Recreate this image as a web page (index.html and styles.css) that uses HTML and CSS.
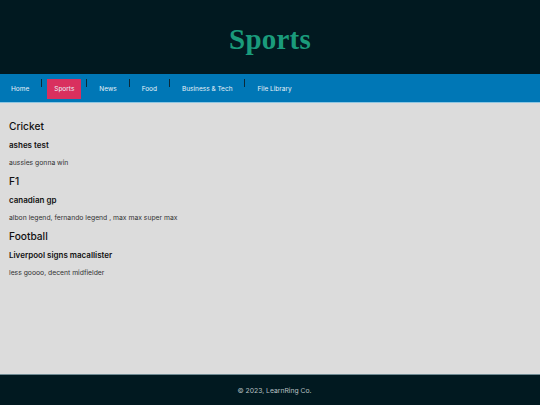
FILE: index.html
```html
<!DOCTYPE html>
<html lang="en">
<head>
<meta charset="utf-8">
<title>Sports</title>
<link rel="stylesheet" href="styles.css">
</head>
<body>
<header class="site-header">
  <h1 class="site-title">Sports</h1>
</header>
<nav class="site-nav">
  <a class="nav-link" href="#">Home</a>
  <span class="nav-sep"></span>
  <a class="nav-link active" href="#">Sports</a>
  <span class="nav-sep"></span>
  <a class="nav-link" href="#">News</a>
  <span class="nav-sep"></span>
  <a class="nav-link" href="#">Food</a>
  <span class="nav-sep"></span>
  <a class="nav-link" href="#">Business &amp; Tech</a>
  <span class="nav-sep"></span>
  <a class="nav-link" href="#">File Library</a>
</nav>
<main class="content">
  <section class="sport">
    <h2 class="sport-title">Cricket</h2>
    <h3 class="post-title">ashes test</h3>
    <p class="post-body">aussies gonna win</p>
  </section>
  <section class="sport">
    <h2 class="sport-title">F1</h2>
    <h3 class="post-title">canadian gp</h3>
    <p class="post-body">albon legend, fernando legend , max max super max</p>
  </section>
  <section class="sport">
    <h2 class="sport-title">Football</h2>
    <h3 class="post-title">Liverpool signs macallister</h3>
    <p class="post-body">less goooo, decent midfielder</p>
  </section>
</main>
<footer class="site-footer">
  <p class="footer-text">© 2023, LearnRing Co.</p>
</footer>
</body>
</html>
```

FILE: styles.css
```css
html, body {
  margin: 0;
  padding: 0;
}
body {
  height: 405px;
  display: flex;
  flex-direction: column;
  font-family: Inter, "Noto Sans", sans-serif;
  background: #dcdcdc;
}
.site-header {
  height: 74px;
  background: #011920;
  display: flex;
  align-items: center;
  justify-content: center;
}
.site-title {
  margin: 0;
  padding-top: 4px;
  font-family: "Liberation Serif", "DejaVu Serif", serif;
  font-weight: bold;
  font-size: 29px;
  color: #1a9b7b;
  letter-spacing: 0.2px;
}
.site-nav {
  height: 28px;
  background: #0077b6;
  border-bottom: 1px solid #8ec6e2;
  display: flex;
  align-items: center;
  padding-left: 4px;
}
.nav-link {
  display: block;
  height: 20px;
  line-height: 20px;
  margin-top: 1px;
  padding: 0 7px;
  font-size: 6.5px;
  color: #e8f2f8;
  text-decoration: none;
}
.nav-link.active {
  background: #d9305e;
}
.nav-sep {
  align-self: flex-start;
  margin: 5px 5px 0;
  width: 1px;
  height: 8px;
  background: #0b2a3a;
}
.content {
  flex: 1;
  padding: 16px 9px 0;
}
.sport-title {
  margin: 0 0 6.5px;
  font-size: 10.2px;
  line-height: 14px;
  font-weight: 500;
  color: #111;
}
.post-title {
  margin: 0 0 7px;
  font-size: 8px;
  line-height: 11px;
  font-weight: 600;
  color: #111;
}
.post-body {
  margin: 0 0 7.5px;
  font-size: 6.8px;
  line-height: 9px;
  color: #333;
}
.site-footer {
  height: 30px;
  padding-left: 9px;
  background: #011920;
  border-top: 1px solid #6f8a93;
  display: flex;
  align-items: center;
  justify-content: center;
}
.footer-text {
  margin: 0;
  font-size: 6.8px;
  color: #b8c0c3;
}
```
